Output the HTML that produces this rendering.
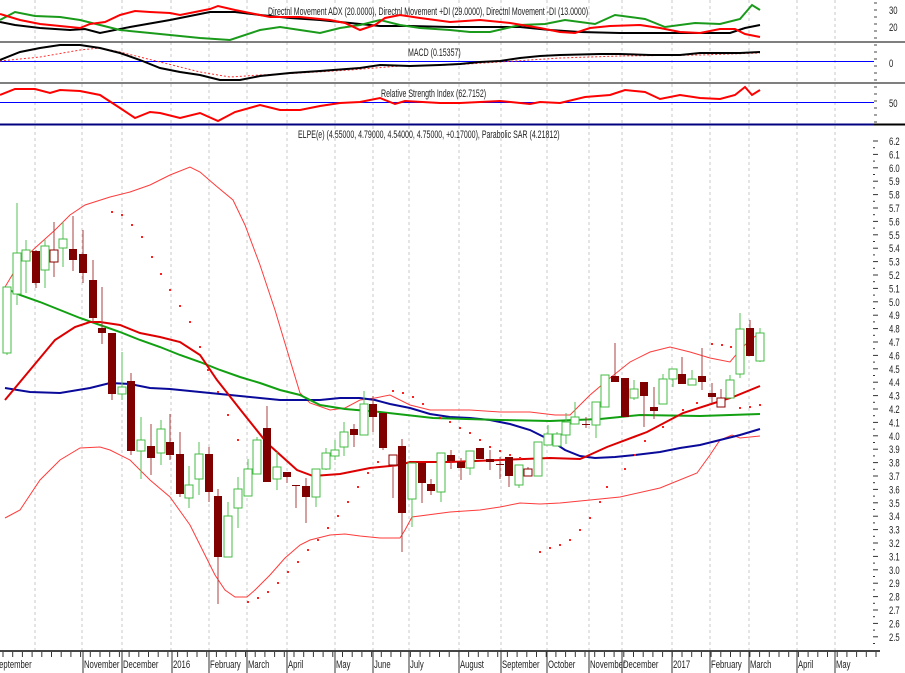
<!DOCTYPE html>
<html><head><meta charset="utf-8">
<style>
html,body{margin:0;padding:0;background:#fff;width:905px;height:673px;overflow:hidden}
svg{display:block}
text{font-family:"Liberation Sans",sans-serif;font-size:11px;fill:#222}
</style></head><body>
<svg id="c" width="905" height="673" xmlns="http://www.w3.org/2000/svg"></svg>
<script>
var s=document.getElementById('c'),h='';
function pl(pts,col,w,extra){h+='<polyline fill="none" stroke="'+col+'" stroke-width="'+w+'" '+(extra||'')+' points="'+pts.map(function(p){return p.join(',')}).join(' ')+'"/>';}
function ln(x1,y1,x2,y2,col,w,extra){h+='<line x1="'+x1+'" y1="'+y1+'" x2="'+x2+'" y2="'+y2+'" stroke="'+col+'" stroke-width="'+w+'" '+(extra||'')+'/>';}
function st(x,y,t,sc){h+='<text x="'+(x/sc)+'" y="'+y+'" transform="scale('+sc+',1)">'+t+'</text>';}
var gx=[35,82,122,171,209,247,287,335,373,409,459,501,547,589,622,672,710,749,797,835];
gx.forEach(function(x){ln(x,0,x,651,'#c8c8c8',1,'stroke-dasharray="3,3"');});
ln(0,42,905,42,'#555',1.5);ln(0,83,905,83,'#555',1.5);
ln(0,61.5,874,61.5,'#0000ff',1);ln(0,102.5,874,102.5,'#0000ff',1);
ln(0,124.5,874,124.5,'#000080',2);ln(874,124.5,905,124.5,'#000',2);
ln(0,651,880,651,'#444',2);
[[10,'30'],[27,'20'],[63,'0'],[103,'50']].forEach(function(a){st(889,a[0]+4,a[1],0.7);});
for(var y=3;y<124;y+=7){ln(874,y,877,y,'#444',1);}
for(var i=0;i<=37;i++){var p=(6.2-i*0.1),yy=141+i*13.4;ln(873,yy,878,yy,'#333',1);ln(873,yy+6.7,875,yy+6.7,'#333',1);
st(889,yy+4,p.toFixed(1),0.7);}
for(var x=3;x<880;x+=9.7){ln(x,652,x,657,'#333',1);}
var ml=[[-6,'September'],[84,'November'],[123,'December'],[173,'2016'],[210,'February'],[248,'March'],[288,'April'],[336,'May'],[374,'June'],[410,'July'],[460,'August'],[502,'September'],[548,'October'],[590,'November'],[623,'December'],[673,'2017'],[711,'February'],[750,'March'],[798,'April'],[836,'May']];
ml.forEach(function(m){if(m[0]>0)ln(m[0]-1,651,m[0]-1,673,'#333',1);st(m[0],668,m[1],0.7);});
st(268,15,'Directnl Movement ADX (20.0000), Directnl Movement +DI (29.0000), Directnl Movement -DI (13.0000)',0.64);
st(408,56,'MACD (0.15357)',0.64);
st(381,97,'Relative Strength Index (62.7152)',0.64);
st(298,138,'ELPE(e) (4.55000, 4.79000, 4.54000, 4.75000, +0.17000), Parabolic SAR (4.21812)',0.64);
pl([[0,22],[15,25],[40,28],[70,30],[85,29],[100,33],[130,27],[170,20],[210,12],[235,12],[260,15],[290,18],[320,20],[350,23],[380,26],[410,26],[450,27],[490,27],[520,27],[550,30],[580,32],[620,33],[700,33],[730,33],[745,28],[760,25]],'#000',2);
pl([[0,20],[15,12],[35,16],[60,17],[80,20],[100,25],[120,30],[150,33],[170,35],[200,38],[230,40],[260,30],[280,27],[300,30],[320,33],[340,28],[360,25],[380,20],[400,25],[420,28],[450,30],[470,32],[490,32],[520,25],[545,24],[565,20],[595,24],[615,15],[645,19],[665,27],[695,23],[720,24],[740,19],[752,5],[760,10]],'#1a9a1a',2);
pl([[0,14],[20,20],[40,24],[60,26],[80,28],[90,24],[105,22],[120,15],[135,11],[150,12],[170,13],[180,15],[195,12],[210,9],[218,6],[235,10],[270,17],[300,17],[330,20],[345,23],[360,30],[375,25],[385,18],[400,15],[420,18],[450,22],[480,20],[510,23],[540,28],[560,32],[575,33],[590,28],[610,26],[640,25],[660,28],[680,32],[700,33],[720,29],[735,29],[745,34],[760,37]],'#ff0000',2);
pl([[0,61],[40,57],[80,50],[100,48],[120,52],[160,62],[200,72],[230,77],[260,75],[300,73],[350,70],[400,66],[450,65],[500,62],[560,58],[620,56],[700,55],[760,53]],'#ff3030',1,'stroke-dasharray="2,2"');
pl([[0,60],[20,52],[40,48],[60,45],[80,45],[100,48],[120,53],[140,60],[160,68],[180,72],[200,75],[220,80],[240,80],[260,76],[290,73],[320,71],[360,68],[380,65],[410,66],[440,65],[460,64],[480,62],[500,61],[520,58],[540,56],[560,55],[600,54],[620,54],[650,55],[680,55],[700,53],[740,53],[760,52]],'#000',2);
pl([[0,95],[15,89],[35,89],[50,93],[60,90],[80,91],[100,95],[120,108],[135,118],[150,112],[160,113],[180,118],[200,113],[218,121],[235,112],[260,105],[280,110],[300,110],[320,106],[340,103],[360,102],[380,98],[395,104],[405,101],[440,103],[460,103],[480,102],[500,101],[530,104],[540,102],[560,103],[585,97],[610,95],[625,90],[645,92],[660,99],[680,95],[700,98],[720,99],[735,95],[745,87],[752,95],[760,90]],'#ff0000',2);
pl([[5,287],[20,262],[35,248],[55,230],[70,215],[85,205],[110,197],[130,192],[150,185],[170,175],[190,167],[200,172],[215,185],[233,200],[245,225],[260,265],[275,310],[290,360],[300,393],[310,403],[330,410],[345,408],[360,400],[375,398],[390,395],[410,405],[430,410],[470,410],[500,412],[530,412],[555,415],[570,415],[590,395],[610,378],[630,362],[650,352],[670,347],[690,352],[710,358],[730,362],[740,350],[750,340],[760,333]],'#ff3b3b',1);
pl([[5,518],[20,510],[40,480],[60,460],[80,448],[100,447],[110,450],[130,460],[150,480],[170,497],[190,525],[200,545],[215,575],[225,590],[235,597],[247,597],[255,590],[270,575],[285,558],[300,545],[310,540],[330,535],[345,534],[360,536],[380,538],[400,538],[405,530],[412,517],[450,512],[480,510],[500,507],[520,503],[540,504],[560,503],[590,500],[620,497],[660,488],[697,473],[710,455],[720,440],[732,435],[740,438],[760,436]],'#ff3b3b',1);
pl([[5,388],[30,392],[60,393],[90,388],[110,383],[130,384],[150,388],[170,389],[200,392],[240,396],[260,398],[280,400],[320,400],[340,398],[360,398],[375,400],[390,404],[410,408],[430,414],[450,417],[470,418],[490,420],[510,424],[530,430],[550,440],[565,450],[580,456],[595,458],[615,457],[635,455],[660,452],[680,448],[700,445],[720,440],[740,435],[760,429]],'#0a0a9a',2);
pl([[5,288],[20,295],[40,302],[60,310],[80,318],[100,325],[120,332],[140,340],[160,347],[180,355],[200,362],[220,370],[240,377],[260,383],[280,390],[300,395],[320,405],[345,409],[380,412],[433,418],[500,420],[550,421],[600,419],[640,415],[700,416],[760,414]],'#11a011',2);
pl([[5,400],[30,370],[55,340],[75,327],[90,322],[100,322],[120,325],[140,333],[160,337],[180,342],[200,355],[217,380],[243,413],[267,443],[297,470],[313,476],[340,474],[370,468],[400,465],[410,462],[450,462],[500,460],[550,458],[580,459],[585,457],[607,447],[647,432],[683,413],[733,397],[760,386]],'#dd0000',2);
[[112,212],[122,215],[132,225],[142,237],[152,257],[161,274],[170,290],[180,306],[190,322],[200,347],[208,370],[218,392],[228,415],[238,440],[248,602],[258,598],[268,592],[278,583],[288,572],[298,562],[308,550],[318,540],[328,528],[338,516],[348,502],[358,487],[368,473],[378,462],[386,447],[393,391],[403,393],[413,397],[423,404],[440,418],[450,422],[460,428],[470,433],[480,440],[490,447],[500,451],[510,455],[520,458],[540,552],[550,548],[560,545],[570,540],[580,530],[590,518],[600,502],[607,487],[625,469],[635,455],[645,441],[663,427],[683,410],[697,403],[712,344],[722,345],[731,347],[740,408],[750,407],[760,405]].forEach(function(d){h+='<rect x="'+(d[0]-1)+'" y="'+(d[1]-1)+'" width="2" height="2" fill="#ff2020"/>';});
var C=[[7,287,353,287,355,'g'],[17,253,294,203,305,'g'],[26,250,261,240,293,'g'],[36,251,283,250,288,'r'],[45,246,270,240,288,'g'],[54,250,262,222,277,'h'],[63,239,248,222,267,'g'],[73,249,260,216,271,'r'],[83,254,273,230,283,'r'],[93,280,318,260,322,'r'],[102,328,333,287,344,'r'],[112,333,394,333,400,'r'],[122,387,394,352,400,'g'],[131,381,451,373,455,'r'],[141,440,451,417,479,'g'],[151,446,458,424,475,'r'],[161,429,453,420,465,'g'],[170,442,455,414,460,'r'],[180,454,494,432,497,'r'],[189,485,498,466,508,'g'],[199,454,479,442,495,'g'],[209,454,492,447,502,'r'],[218,496,557,489,604,'r'],[228,516,557,502,557,'g'],[238,489,508,477,528,'g'],[248,469,496,459,496,'g'],[257,440,474,437,474,'g'],[267,428,482,406,482,'r'],[277,467,479,452,490,'g'],[287,472,477,472,483,'r'],[296,485,486,485,508,'r'],[306,486,497,478,523,'r'],[316,469,497,469,507,'g'],[326,453,469,448,470,'g'],[335,450,456,440,460,'g'],[344,432,447,422,456,'g'],[354,429,435,424,447,'r'],[364,404,435,391,435,'g'],[373,404,417,396,432,'r'],[383,413,448,413,450,'r'],[393,455,465,455,498,'h'],[402,446,513,439,552,'r'],[412,463,499,463,527,'g'],[422,463,483,463,503,'r'],[431,484,491,479,495,'r'],[441,453,492,453,502,'g'],[451,455,461,450,469,'r'],[461,462,468,458,480,'r'],[470,451,468,451,475,'g'],[480,448,459,448,459,'r'],[490,459,462,450,470,'r'],[500,464,465,457,479,'r'],[509,457,476,457,487,'r'],[519,465,485,465,488,'g'],[528,469,476,467,476,'h'],[538,442,476,442,476,'g'],[548,434,445,425,445,'g'],[557,434,446,432,446,'g'],[566,422,435,413,444,'g'],[575,417,424,402,424,'g'],[586,424,425,417,428,'r'],[596,402,425,402,438,'g'],[605,375,407,375,407,'g'],[615,376,382,343,382,'r'],[625,378,417,378,417,'r'],[634,389,398,380,400,'g'],[644,382,396,382,427,'r'],[654,407,411,387,419,'r'],[663,379,404,374,404,'g'],[673,369,379,369,387,'g'],[682,374,384,357,384,'r'],[692,379,385,370,385,'g'],[702,376,382,348,390,'r'],[712,393,397,383,403,'r'],[721,398,407,389,407,'h'],[730,380,398,375,398,'g'],[740,329,374,313,378,'g'],[750,328,356,320,356,'r'],[760,333,361,328,362,'g']];
C.forEach(function(c){var x=c[0],t=c[5];var wc=t=='g'?'#55c055':'#a84040';
ln(x,c[3],x,c[1],wc,1);ln(x,c[2],x,c[4],wc,1);
var hh=Math.max(1,c[2]-c[1]);
if(t=='g')h+='<rect x="'+(x-4)+'" y="'+c[1]+'" width="8" height="'+hh+'" fill="#fff" stroke="#44bb44" stroke-width="1"/>';
else if(t=='h')h+='<rect x="'+(x-4)+'" y="'+c[1]+'" width="8" height="'+hh+'" fill="#fff" stroke="#8b0000" stroke-width="1"/>';
else h+='<rect x="'+(x-4)+'" y="'+c[1]+'" width="8" height="'+hh+'" fill="#800000"/>';});
s.innerHTML=h;
</script>
</body></html>
